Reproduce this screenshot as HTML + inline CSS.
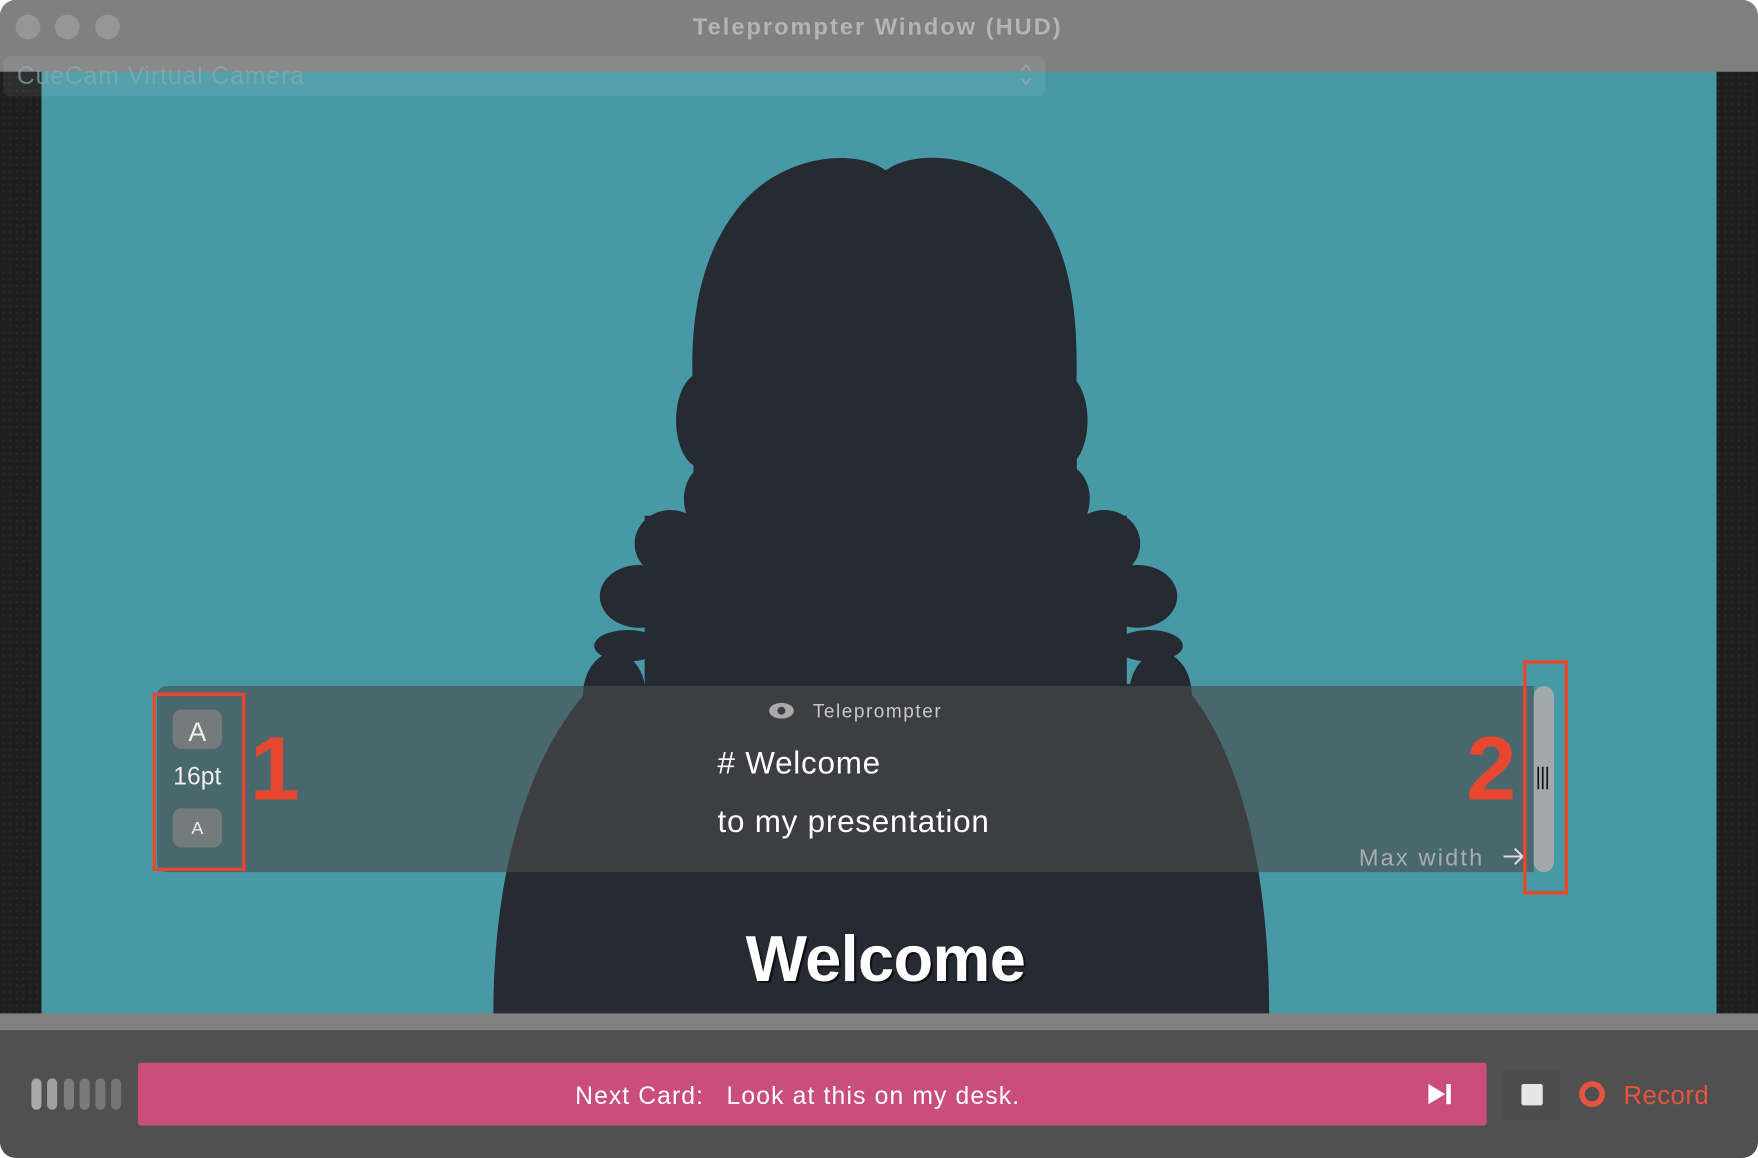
<!DOCTYPE html>
<html><head><meta charset="utf-8"><style>
html,body{margin:0;padding:0;background:#fff;width:1758px;height:1158px;overflow:hidden}
svg{display:block}
text{font-family:"Liberation Sans",sans-serif}
</style></head><body>
<svg width="1758" height="1158" viewBox="0 0 1568 1033" preserveAspectRatio="none" xmlns="http://www.w3.org/2000/svg">
<defs>
<pattern id="dots" width="6" height="6" patternUnits="userSpaceOnUse"><rect width="6" height="6" fill="#1f1f1f"/><circle cx="3" cy="3" r="1" fill="#2b2b2b"/></pattern>
<clipPath id="win"><rect x="0" y="0" width="1568" height="1033" rx="14"/></clipPath>
</defs>
<g clip-path="url(#win)">
<rect x="0" y="0" width="1568" height="1033" fill="#505050"/>
<rect x="0" y="63" width="1568" height="842" fill="url(#dots)"/>
<rect x="37" y="63" width="1494" height="842" fill="#4899a6"/>
<g fill="#262a33">
<path d="M790 152 C760 130,690 140,655 190 C625 230,615 285,618 345 L620 650 L962 650 L960 345 C962 280,955 225,925 185 C890 140,820 130,790 152 Z"/>
<ellipse cx="625" cy="375" rx="22" ry="42"/>
<ellipse cx="948" cy="375" rx="22" ry="42"/>
<ellipse cx="632" cy="445" rx="22" ry="30"/>
<ellipse cx="950" cy="445" rx="22" ry="30"/>
<ellipse cx="598" cy="485" rx="32" ry="30"/>
<ellipse cx="985" cy="485" rx="32" ry="30"/>
<ellipse cx="570" cy="532" rx="35" ry="28"/>
<ellipse cx="1015" cy="532" rx="35" ry="28"/>
<ellipse cx="560" cy="576" rx="30" ry="14"/>
<ellipse cx="1025" cy="576" rx="30" ry="14"/>
<rect x="575" y="460" width="430" height="180"/>
<ellipse cx="548" cy="620" rx="28" ry="38"/>
<ellipse cx="1035" cy="620" rx="28" ry="38"/>
<path d="M530 610 C480 660,440 760,440 905 L1132 905 C1132 760,1100 660,1055 610 Z"/>
</g>
<rect x="0" y="0" width="1568" height="64" fill="#808080"/>
<circle cx="25" cy="24" r="11" fill="#969696"/>
<circle cx="60" cy="24" r="11" fill="#969696"/>
<circle cx="96" cy="24" r="11" fill="#969696"/>
<text x="782" y="31" font-size="21" font-weight="bold" fill="#b4b4b4" text-anchor="middle" textLength="328">Teleprompter Window (HUD)</text>
<rect x="3" y="50" width="929" height="36" rx="6" fill="#ffffff" fill-opacity="0.07"/>
<text x="15" y="75" font-size="22" fill="#8aa9ad" fill-opacity="0.7" textLength="256">CueCam Virtual Camera</text>
<path d="M911 63 L915 58 L919 63 M911 70 L915 75 L919 70" stroke="#8aa9ad" stroke-width="1.5" fill="none"/>
<path d="M150 612 L1368 612 L1368 778 L150 778 Q140 778 140 768 L140 622 Q140 612 150 612 Z" fill="#4b4b4b" fill-opacity="0.62"/>
<rect x="154" y="633" width="44" height="35" rx="8" fill="#737b7b"/>
<text x="176" y="661" font-size="24" fill="#eee" text-anchor="middle">A</text>
<text x="176" y="700" font-size="22" fill="#eee" text-anchor="middle">16pt</text>
<rect x="154" y="721" width="44" height="35" rx="8" fill="#737b7b"/>
<text x="176" y="744" font-size="16" fill="#eee" text-anchor="middle">A</text>
<rect x="137.5" y="619.5" width="80" height="156" fill="none" stroke="#e8472f" stroke-width="3"/>
<text x="245" y="713" font-size="80" font-weight="bold" fill="#e8472f" text-anchor="middle">1</text>
<ellipse cx="697" cy="634" rx="11" ry="7" fill="#aaa"/><circle cx="697" cy="634" r="3.5" fill="#3e3f44"/>
<text x="725" y="640" font-size="17" fill="#c8c8c8" textLength="114">Teleprompter</text>
<text x="640" y="690" font-size="28" fill="#fff" textLength="145"># Welcome</text>
<text x="640" y="742" font-size="28" fill="#fff" textLength="242">to my presentation</text>
<text x="1212" y="772" font-size="21" fill="#a8adae" textLength="110">Max width</text>
<path d="M1341 764 L1358 764 M1351 757 L1358 764 L1351 771" stroke="#ddd" stroke-width="1.8" fill="none"/>
<rect x="1368" y="612" width="18" height="166" rx="9" fill="#a3a9aa"/>
<path d="M1372 684 V704 M1376 684 V704 M1380 684 V704" stroke="#111" stroke-width="1.5"/>
<rect x="1360" y="590.5" width="37" height="206" fill="none" stroke="#e8472f" stroke-width="3"/>
<text x="1330" y="713" font-size="80" font-weight="bold" fill="#e8472f" text-anchor="middle">2</text>
<text x="792" y="877" font-size="58" font-weight="bold" fill="#111" text-anchor="middle" textLength="250">Welcome</text>
<text x="790" y="875" font-size="58" font-weight="bold" fill="#fff" text-anchor="middle" textLength="250">Welcome</text>
<rect x="0" y="904" width="1568" height="15" fill="#818181"/>
<rect x="28" y="962" width="9" height="28" rx="4.5" fill="#a9a9a9"/>
<rect x="42" y="962" width="9" height="28" rx="4.5" fill="#a0a0a0"/>
<rect x="57" y="962" width="9" height="28" rx="4.5" fill="#7d7d7d"/>
<rect x="71" y="962" width="9" height="28" rx="4.5" fill="#7a7a7a"/>
<rect x="85" y="962" width="9" height="28" rx="4.5" fill="#777"/>
<rect x="99" y="962" width="9" height="28" rx="4.5" fill="#747474"/>
<rect x="123" y="948" width="1203" height="56" rx="3" fill="#ca4d7b"/>
<text x="627" y="985" font-size="22" fill="#fff" text-anchor="end" textLength="114">Next Card:</text>
<text x="648" y="985" font-size="22" fill="#fff" textLength="261">Look at this on my desk.</text>
<path d="M1274 967 L1289 976 L1274 985 Z" fill="#fff"/><rect x="1290" y="967" width="4" height="18" fill="#fff"/>
<rect x="1340" y="955" width="52" height="45" fill="#4d4d4d"/>
<rect x="1357" y="967" width="19" height="19" rx="2" fill="#e6e6e6"/>
<circle cx="1420" cy="976" r="9" fill="none" stroke="#e8533f" stroke-width="5"/>
<text x="1448" y="985" font-size="23" fill="#e8533f" textLength="76">Record</text>
</g>
</svg>
</body></html>
